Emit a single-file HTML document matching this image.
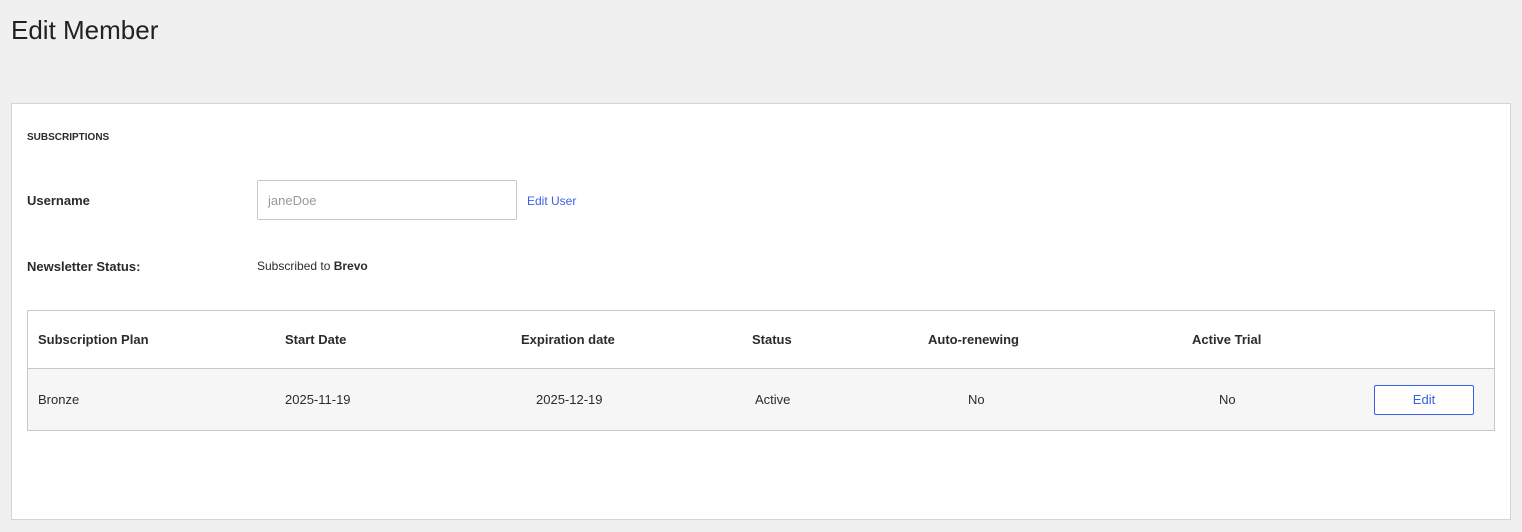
<!DOCTYPE html>
<html><head><meta charset="utf-8"><style>
*{margin:0;padding:0;box-sizing:border-box}
body{width:1522px;height:532px;background:#f0f0f0;font-family:"Liberation Sans",sans-serif;color:#2b2b2b;position:relative;overflow:hidden}
.a{position:absolute;white-space:nowrap;font-size:13px;line-height:16px;margin-top:1px}
.b{font-weight:bold}
h1{position:absolute;left:11px;top:14px;font-size:26px;font-weight:normal;color:#222;line-height:32px}
.panel{position:absolute;left:11px;top:103px;width:1500px;height:417px;background:#fff;border:1px solid #d4d4d4}
.tbl{position:absolute;left:27px;top:310px;width:1468px;height:121px;border:1px solid #c8c8c8}
.row{position:absolute;left:0;top:57px;width:1466px;height:62px;background:#f5f6f5;border-top:1px solid #c8c8c8}
.inp{position:absolute;left:257px;top:180px;width:260px;height:40px;border:1px solid #c8c8c8;border-radius:2px;background:#fff}
.btn{position:absolute;left:1374px;top:385px;width:100px;height:30px;border:1px solid #3b5ee8;border-radius:2px;color:#3b5ee8;font-size:13px;text-align:center;line-height:28px;background:#fff}
</style></head><body>
<h1>Edit Member</h1>
<div class="panel"></div>
<div class="a b" style="left:27px;top:129px;font-size:10px">SUBSCRIPTIONS</div>
<div class="a b" style="left:27px;top:192px">Username</div>
<div class="inp"></div>
<div class="a" style="left:268px;top:192px;color:#999">janeDoe</div>
<div class="a" style="left:527px;top:192px;color:#3b5ee8;font-size:12px">Edit User</div>
<div class="a b" style="left:27px;top:258px">Newsletter Status:</div>
<div class="a" style="left:257px;top:257px;font-size:12px">Subscribed to <b>Brevo</b></div>
<div class="tbl"><div class="row"></div></div>
<div class="a b" style="left:38px;top:331px">Subscription Plan</div>
<div class="a b" style="left:285px;top:331px">Start Date</div>
<div class="a b" style="left:521px;top:331px">Expiration date</div>
<div class="a b" style="left:752px;top:331px">Status</div>
<div class="a b" style="left:928px;top:331px">Auto-renewing</div>
<div class="a b" style="left:1192px;top:331px">Active Trial</div>
<div class="a" style="left:38px;top:391px">Bronze</div>
<div class="a" style="left:285px;top:391px">2025-11-19</div>
<div class="a" style="left:536px;top:391px">2025-12-19</div>
<div class="a" style="left:755px;top:391px">Active</div>
<div class="a" style="left:968px;top:391px">No</div>
<div class="a" style="left:1219px;top:391px">No</div>
<div class="btn">Edit</div>
</body></html>
